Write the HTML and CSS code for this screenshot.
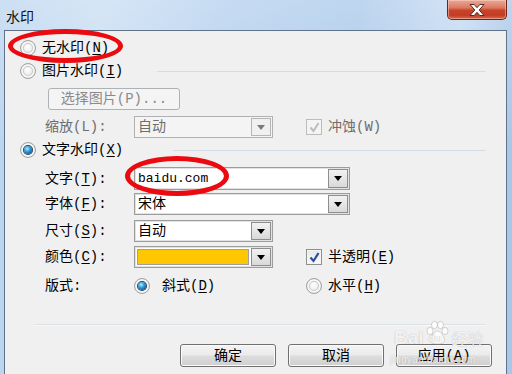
FILE: index.html
```html
<!DOCTYPE html>
<html lang="zh">
<head>
<meta charset="utf-8">
<title>水印</title>
<link rel="stylesheet" href="styles.css">
</head>
<body>
<div class="window">
  <div class="titlebar">
    <span class="title">水印</span>
    <div class="close">
      <svg width="24" height="14" viewBox="0 0 24 14"><path d="M5 1.5h4.2l2.8 3.2 2.8-3.2H19l-4.8 5.5 4.8 5.5h-4.2L12 9.3l-2.8 3.2H5l4.8-5.5z" fill="#fff" stroke="#5a2a22" stroke-width="1"/></svg>
    </div>
  </div>
  <div class="frame">
    <div class="client">
      <div class="row radio-row r1">
        <span class="radio"></span><span class="txt">无水印(<u>N</u>)</span>
      </div>
      <div class="row radio-row r2">
        <span class="radio"></span><span class="txt">图片水印(<u>I</u>)</span><span class="sep sep-pic"></span>
      </div>
      <div class="row r3">
        <span class="btn disabled pick">选择图片(P)...</span>
      </div>
      <div class="row form-row r4">
        <span class="lbl dim">缩放(L):</span>
        <span class="cell"><span class="combo short disabled"><span class="val">自动</span><span class="arrow"><i></i></span></span></span>
        <span class="chk disabled"><svg width="13" height="13" viewBox="0 0 13 13"><path d="M2.5 6.5l3 3.5 5-8" fill="none" stroke="#bdbdbd" stroke-width="2"/></svg></span><span class="txt dim">冲蚀(W)</span>
      </div>
      <div class="row radio-row r5">
        <span class="radio on"></span><span class="txt">文字水印(<u>X</u>)</span><span class="sep sep-txt"></span>
      </div>
      <div class="row form-row r6">
        <span class="lbl">文字(<u>T</u>):</span>
        <span class="combo long"><span class="val mono">baidu.com</span><span class="arrow"><i></i></span></span>
      </div>
      <div class="row form-row r7">
        <span class="lbl">字体(<u>F</u>):</span>
        <span class="combo long"><span class="val">宋体</span><span class="arrow"><i></i></span></span>
      </div>
      <div class="row form-row r8">
        <span class="lbl">尺寸(<u>S</u>):</span>
        <span class="cell"><span class="combo short"><span class="val">自动</span><span class="arrow"><i></i></span></span></span>
      </div>
      <div class="row form-row r9">
        <span class="lbl">颜色(<u>C</u>):</span>
        <span class="cell"><span class="combo short"><span class="swatch"></span><span class="arrow"><i></i></span></span></span>
        <span class="chk"><svg width="13" height="13" viewBox="0 0 13 13"><path d="M2.5 6.5l3 3.5 5-8" fill="none" stroke="#2b4f9a" stroke-width="2.2"/></svg></span><span class="txt">半透明(<u>E</u>)</span>
      </div>
      <div class="row form-row r10">
        <span class="lbl">版式:</span>
        <span class="cell"><span class="radio on"></span><span class="txt">斜式(<u>D</u>)</span></span>
        <span class="radio"></span><span class="txt">水平(<u>H</u>)</span>
      </div>
      <div class="bottom-sep"></div>
      <div class="buttons">
        <span class="btn">确定</span>
        <span class="btn">取消</span>
        <span class="btn">应用(<u>A</u>)</span>
      </div>
    </div>
  </div>
  <div class="ellipse e1"></div>
  <div class="ellipse e2"></div>
  <div class="wm">
    <div class="wm-top"><span class="wm-bai">Bai</span><span class="wm-paw"><svg width="26" height="26" viewBox="0 0 26 26"><g fill="rgba(255,255,255,0.85)" stroke="rgba(150,150,150,0.5)" stroke-width="0.8"><ellipse cx="6" cy="11" rx="3" ry="3.6"/><ellipse cx="10.5" cy="5" rx="3" ry="3.6"/><ellipse cx="16.5" cy="5" rx="3" ry="3.6"/><ellipse cx="21" cy="11" rx="3" ry="3.6"/><path d="M13.5 11c3 0 7 6 7 9s-3 4-7 4-7-1-7-4 4-9 7-9z"/></g></svg><span class="wm-du">du</span></span><span class="wm-jy">经验</span></div>
    <div class="wm-url">jingyan.baidu.com</div>
  </div>
</div>
</body>
</html>
```

FILE: styles.css
```css
* { box-sizing: border-box; }
html, body { margin: 0; padding: 0; }
body {
  width: 512px;
  height: 374px;
  overflow: hidden;
  font-family: "Liberation Mono", "Noto Sans CJK SC", monospace;
  font-size: 14px;
  color: #000;
}
u { text-decoration: underline; text-underline-offset: 2px; }
.window {
  position: relative;
  width: 512px;
  height: 374px;
  background:
    linear-gradient(180deg, rgba(255,255,255,0.25), rgba(255,255,255,0) 40%),
    linear-gradient(90deg, #bcd5ef 0%, #c8ddf3 20%, #b3cfee 45%, #a9c8ea 70%, #c3d9f1 90%, #a8c6e8 100%);
}
.titlebar {
  display: flex;
  align-items: flex-start;
  height: 30px;
  padding-left: 6px;
  padding-right: 5px;
}
.title {
  margin-top: 6px;
  line-height: 20px;
  font-size: 14px;
  color: #111;
  font-family: "Noto Sans CJK SC", sans-serif;
}
.close {
  margin-left: auto;
  width: 60px;
  height: 20px;
  border: 1px solid #6d2418;
  border-top: none;
  border-radius: 0 0 5px 5px;
  background: linear-gradient(180deg, #e9a996 0%, #dc7a62 40%, #c8432a 55%, #c23d24 80%, #d56a4c 100%);
  box-shadow: inset 0 0 0 1px rgba(255,220,210,0.45);
  display: flex;
  align-items: center;
  justify-content: center;
}
.frame {
  padding-left: 4px;
}
.client {
  width: 503px;
  height: 344px;
  background: #f0f0f0;
  border: 1px solid #5f7287;
  border-bottom: none;
  padding: 0 20px 0 0;
  display: flex;
  flex-direction: column;
}
.row {
  display: flex;
  align-items: center;
  flex: none;
}
.radio-row { height: 18px; padding-left: 15px; }
.r1 { margin-top: 8px; }
.r2 { margin-top: 5px; }
.r3 { margin-top: 8px; height: 22px; padding-left: 43px; }
.form-row { height: 22px; padding-left: 40px; }
.r4 { margin-top: 6px; }
.r5 { margin-top: 3px; }
.r6 { margin-top: 8px; height: 23px; }
.r7 { margin-top: 3px; }
.r8 { margin-top: 5px; }
.r9 { margin-top: 4px; }
.r10 { margin-top: 9px; height: 18px; }
.txt { line-height: 18px; white-space: nowrap; }
.radio-row .txt { margin-left: 6px; }
.radio {
  width: 16px;
  height: 16px;
  border-radius: 50%;
  flex: none;
  border: 1px solid #a2a2a2;
  background: radial-gradient(circle at 45% 40%, #ffffff 0%, #f0f0f0 40%, #d2d2d2 75%, #c0c0c0 100%);
  box-shadow: inset 0 0 0 2px #f6f6f6, inset 0 0 0 3px #c9c9c9;
  position: relative;
}
.radio.on::after {
  content: "";
  position: absolute;
  left: 3px;
  top: 3px;
  width: 8px;
  height: 8px;
  border-radius: 50%;
  background: radial-gradient(circle at 40% 35%, #b8ecff 0%, #3fa6e0 35%, #0f5d9f 75%, #0a3c6e 100%);
  box-shadow: 0 0 0 1px #274a6a;
}
.sep {
  flex: 1;
  height: 1px;
  background: #d5dde3;
}
.sep-pic { margin-left: 34px; }
.sep-txt { margin-left: 50px; }
.btn {
  display: flex;
  align-items: center;
  justify-content: center;
  width: 96px;
  height: 23px;
  border: 1px solid #707070;
  border-radius: 3px;
  background: linear-gradient(180deg, #f3f3f3 0%, #ebebeb 48%, #dddddd 52%, #cfcfcf 100%);
  box-shadow: inset 0 0 0 1px #fbfbfb;
  font-size: 14px;
  line-height: 18px;
  white-space: nowrap;
}
.btn.disabled {
  background: #f4f4f4;
  border-color: #adb2b5;
  box-shadow: none;
  color: #8a8a8a;
}
.pick { width: 132px; height: 22px; }
.lbl {
  width: 89px;
  flex: none;
  line-height: 18px;
  white-space: nowrap;
}
.dim { color: #6d6d6d; }
.cell {
  width: 172px;
  flex: none;
  display: flex;
  align-items: center;
}
.combo {
  display: flex;
  align-items: stretch;
  height: 100%;
  border: 1px solid #9c9c9c;
  box-shadow: inset 0 0 0 1px #e2e2e2;
  background: #fff;
  padding: 1px;
}
.cell .combo { height: 22px; }
.combo.short { width: 139px; }
.combo.long { width: 216px; }
.combo.disabled {
  background: #f4f4f4;
  border-color: #b1b1b1;
  box-shadow: none;
  color: #6d6d6d;
}
.val {
  flex: 1;
  padding-left: 2px;
  line-height: 18px;
  align-self: center;
}
.mono {
  font-family: "Liberation Mono", "Noto Sans CJK SC", monospace;
  font-size: 13px;
  padding-left: 2px;
}
.swatch {
  flex: 1;
  margin: 1px 2px 1px 1px;
  background: #ffc700;
  border: 1px solid #a0a0a0;
}
.arrow {
  width: 20px;
  flex: none;
  margin-left: auto;
  border: 1px solid #8e8e8e;
  background: linear-gradient(180deg, #f2f2f2 0%, #e6e6e6 50%, #d9d9d9 100%);
  display: flex;
  align-items: center;
  justify-content: center;
}
.arrow i {
  width: 0;
  height: 0;
  border-left: 4px solid transparent;
  border-right: 4px solid transparent;
  border-top: 5px solid #000;
}
.combo.disabled .arrow { border-color: #b5b5b5; background: #f0f0f0; }
.combo.disabled .arrow i { border-top-color: #7a7a7a; }
.chk {
  width: 16px;
  height: 16px;
  flex: none;
  border: 1px solid #8f8f8f;
  background: linear-gradient(180deg, #e8e8e8, #fafafa);
  box-shadow: inset 0 0 0 1px #f4f4f4;
  display: flex;
  align-items: center;
  justify-content: center;
  margin-right: 6px;
}
.chk.disabled { border-color: #bcbcbc; background: #f4f4f4; }
.r10 .cell .txt { margin-left: 6px; }
.r10 .radio { margin-right: 6px; }
.bottom-sep {
  flex: none;
  margin-top: 29px;
  margin-left: 30px;
  height: 2px;
  background: #dbe2e8;
  border-bottom: 1px solid #f8f8f8;
}
.buttons {
  flex: none;
  display: flex;
  justify-content: flex-end;
  gap: 12px;
  margin-top: 18px;
  padding-right: 0;
  margin-right: -6px;
}
.ellipse {
  position: absolute;
  border: 5px solid #ea0a10;
  border-radius: 50%;
}
.e1 { left: 8px; top: 29px; width: 115px; height: 34px; }
.e2 { left: 125px; top: 156px; width: 104px; height: 40px; }
.wm {
  position: absolute;
  left: 390px;
  top: 316px;
  width: 100px;
  color: rgba(255,255,255,0.85);
  text-shadow: 0 0 1px rgba(120,120,120,0.6);
  font-family: "Liberation Sans", sans-serif;
  pointer-events: none;
}
.wm-top { display: flex; align-items: flex-end; height: 32px; }
.wm-bai { font-size: 19px; font-weight: bold; line-height: 20px; margin-left: 4px; }
.wm-paw { position: relative; width: 26px; height: 30px; }
.wm-paw svg { position: absolute; left: 0; top: 2px; }
.wm-du { position: absolute; left: 5px; top: 14px; font-size: 11px; font-weight: bold; color: rgba(255,255,255,0.9); }
.wm-jy { font-family: "Noto Sans CJK SC", sans-serif; font-size: 16px; line-height: 20px; margin-left: 2px; }
.wm-url { font-size: 10px; margin-top: 6px; letter-spacing: 0.3px; }
```
